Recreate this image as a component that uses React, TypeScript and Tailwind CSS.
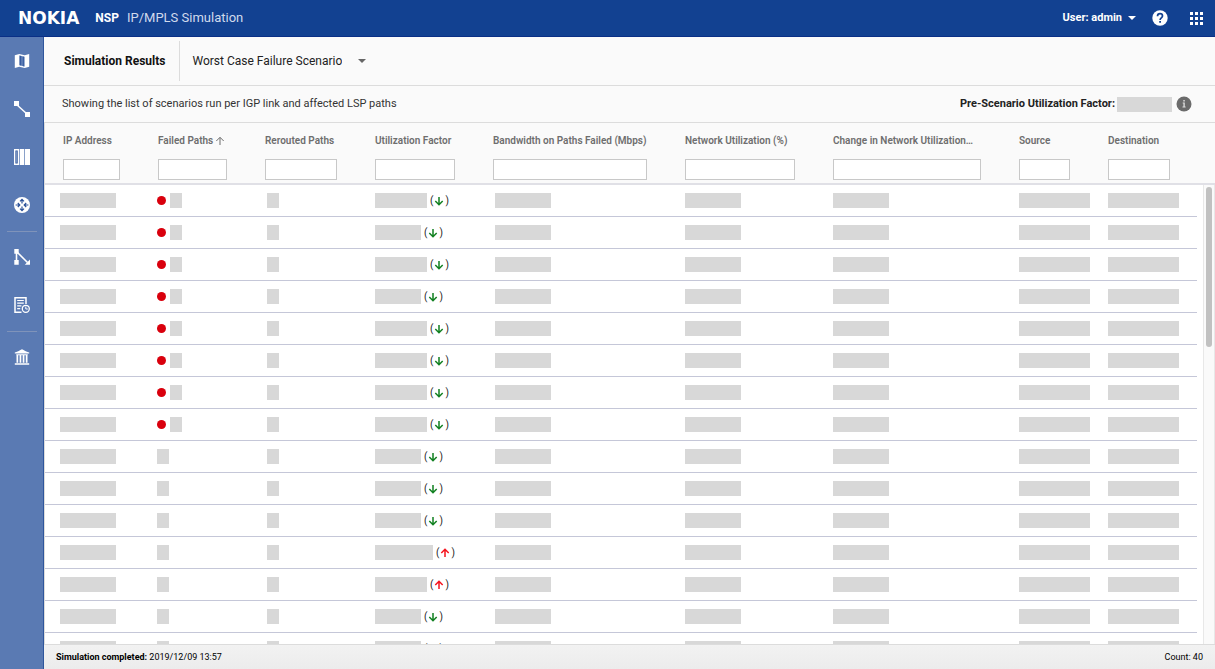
import React from "react";

type Trend = "up" | "down";

interface Row {
  failed: boolean;
  size: "sm" | "md" | "lg";
  trend: Trend;
}

const rows: Row[] = [
  { failed: true, size: "md", trend: "down" },
  { failed: true, size: "sm", trend: "down" },
  { failed: true, size: "md", trend: "down" },
  { failed: true, size: "sm", trend: "down" },
  { failed: true, size: "md", trend: "down" },
  { failed: true, size: "md", trend: "down" },
  { failed: true, size: "md", trend: "down" },
  { failed: true, size: "md", trend: "down" },
  { failed: false, size: "sm", trend: "down" },
  { failed: false, size: "sm", trend: "down" },
  { failed: false, size: "sm", trend: "down" },
  { failed: false, size: "lg", trend: "up" },
  { failed: false, size: "md", trend: "up" },
  { failed: false, size: "sm", trend: "down" },
  { failed: false, size: "sm", trend: "down" },
];

const columns = [
  { label: "IP Address", col: "w-[95px]" },
  { label: "Failed Paths", col: "w-[107px]", sorted: true },
  { label: "Rerouted Paths", col: "w-[110px]" },
  { label: "Utilization Factor", col: "w-[118px]" },
  { label: "Bandwidth on Paths Failed (Mbps)", col: "w-[192px]" },
  { label: "Network Utilization (%)", col: "w-[148px]" },
  { label: "Change in Network Utilization…", col: "w-[186px]" },
  { label: "Source", col: "w-[89px]" },
  { label: "Destination", col: "w-[107px]", last: true },
];

const factorWidth = { sm: "w-[46px]", md: "w-[52px]", lg: "w-[58px]" };

function Bar({ className = "w-14" }: { className?: string }) {
  return <span className={`block h-[15px] shrink-0 bg-[#d8d8d8] ${className}`} />;
}

function Arrow({ up = false, className = "" }: { up?: boolean; className?: string }) {
  return (
    <svg viewBox="0 0 10 10" className={`size-[10px] shrink-0 ${className}`} fill="none" stroke="currentColor" aria-hidden="true">
      {up ? <path d="M5 9V1.500M1.300 5 5 1.300 8.700 5" /> : <path d="M5 1v7.500M1.300 5 5 8.700 8.700 5" />}
    </svg>
  );
}

function MapIcon() {
  return (
    <svg viewBox="0 0 16 16" className="size-4" aria-hidden="true">
      <path fill="#fff" d="M.8 2.2 5.3.9l5.4 1.300L15.200.9v12.900l-4.500 1.300-5.400-1.300-4.500 1.300z" />
      <path fill="#5a7ab3" d="M5.600 2.600l4.700 1.100v9.700l-4.700-1.100z" />
      <path fill="#2a5199" d="M5.600 2.600l1.100.3v9.600l-1.100-.3zM9.400 3.500l.9.2v9.700l-.9-.2z" />
    </svg>
  );
}

function LinkIcon() {
  return (
    <svg viewBox="0 0 16 16" className="size-4" aria-hidden="true">
      <path stroke="#fff" strokeWidth="1.500" d="M2 3l11 10" />
      <path fill="#fff" d="M0 0h5v5H0zM11 11h5v5h-5z" />
    </svg>
  );
}

function ColumnsIcon() {
  return (
    <svg viewBox="0 0 16 16" className="size-4" aria-hidden="true">
      <path fill="#fff" d="M0 0h5v16H0zM5.700 0h4.600v16H5.700zM11 0h5v16h-5z" />
      <path fill="#2a5199" d="M1.400 1.500h2.300v13H1.400z" />
      <path fill="#7c96c4" d="M2.100 2.200H3v11.600h-.9z" />
    </svg>
  );
}

function RouterIcon() {
  return (
    <svg viewBox="0 0 16 16" className="size-4" aria-hidden="true">
      <circle cx="8" cy="8" r="8" fill="#fff" />
      <g fill="none" stroke="#2a5199" strokeWidth="1.200">
        <path d="M8 6.600V2.400M6 4.300l2-2 2 2M8 9.400v4.200M6 11.700l2 2 2-2M1.600 8h4M3.800 6l2 2-2 2M14.400 8h-4M12.200 6l-2 2 2 2" />
      </g>
    </svg>
  );
}

function TopologyIcon() {
  return (
    <svg viewBox="0 0 16 16" className="size-4" aria-hidden="true">
      <path stroke="#fff" strokeWidth="1.600" d="M2.500 3v10M3 3l10.500 10.500" />
      <path fill="#fff" d="M.3 0h4.400v4.800H.3zM.3 11h4.400v4.800H.3zM16 15.800h-5.200L16 10.600z" />
    </svg>
  );
}

function ReportIcon() {
  return (
    <svg viewBox="0 0 16 16" className="size-4" fill="none" stroke="#fff" aria-hidden="true">
      <path strokeWidth="1.500" d="M7.500 15.200H1V.8h11V7" />
      <path strokeWidth="1.200" d="M3.200 3.500h6.600M3.200 6.200h6.600M3.200 8.900h4.200M3.200 11.600h3" />
      <circle cx="11.800" cy="11.800" r="3.500" strokeWidth="1.300" />
      <path strokeWidth="1" d="M11.800 9.600v2.400h2" />
    </svg>
  );
}

function BankIcon() {
  return (
    <svg viewBox="0 0 16 16" className="size-4" fill="#fff" aria-hidden="true">
      <path d="M.8 4.600V3.400C4 2.600 5.800 1.200 8 .2c2.200 1 4 2.400 7.200 3.200v1.200zM2.300 5.200h11.400v1.100H2.300zM2.500 6.300h1.700v7.400H2.500zM5.600 6.300h1.700v7.400H5.600zM8.700 6.300h1.700v7.400H8.700zM11.800 6.300h1.700v7.400h-1.700zM.8 14.200h14.400v1.600H.8z" />
    </svg>
  );
}

function NavLink({ label, children }: { label: string; children: React.ReactNode }) {
  return (
    <a href="#" aria-label={label} className="flex h-12 w-full items-center justify-center">
      {children}
    </a>
  );
}

function NavDivider() {
  return <hr className="mt-0.5 mb-px w-[30px] border-[#7f93ba]" />;
}

export default function App() {
  return (
    <div className="flex h-screen flex-col overflow-hidden bg-[#fafafa] font-[Roboto,'Noto_Sans',sans-serif] text-[#333]">
      <header className="flex h-[37px] shrink-0 items-center border-b border-[#0a2f86] bg-[#124191] pr-3 pl-[18px] text-white">
        <span className="font-['DejaVu_Sans',sans-serif] text-[17px] leading-5 font-bold">NOKIA</span>
        <span className="ml-4 text-[12px] leading-5 font-bold">NSP</span>
        <span className="ml-2 text-[13px] leading-5 text-[#d0daec]">IP/MPLS Simulation</span>
        <button type="button" className="ml-auto flex items-center gap-1.5 text-[11px] leading-5 font-bold">
          User: admin
          <svg viewBox="0 0 8 4" className="h-1 w-2" aria-hidden="true">
            <path fill="#fff" d="M0 0h8L4 4z" />
          </svg>
        </button>
        <button type="button" aria-label="Help" className="ml-4">
          <svg viewBox="0 0 16 16" className="size-4" aria-hidden="true">
            <circle cx="8" cy="8" r="7.700" fill="#fff" />
            <path fill="none" stroke="#124191" strokeWidth="1.700" d="M5.500 6.300C5.500 4.600 6.600 3.700 8 3.700s2.500.9 2.500 2.300c0 1.800-2.400 1.900-2.400 3.900" />
            <path fill="#124191" d="M7.200 11h1.800v1.800H7.200z" />
          </svg>
        </button>
        <button type="button" aria-label="Applications" className="ml-[22px]">
          <svg viewBox="0 0 13 13" className="size-[13px]" fill="#fff" aria-hidden="true">
            <path d="M0 0h3v3H0zM5 0h3v3H5zM10 0h3v3h-3zM0 5h3v3H0zM5 5h3v3H5zM10 5h3v3h-3zM0 10h3v3H0zM5 10h3v3H5zM10 10h3v3h-3z" />
          </svg>
        </button>
      </header>

      <div className="flex min-h-0 flex-1">
        <nav aria-label="Main" className="flex w-11 shrink-0 flex-col items-center border-r border-[#2f569c] bg-[#5a7ab3]">
          <NavLink label="Map"><MapIcon /></NavLink>
          <NavLink label="Links"><LinkIcon /></NavLink>
          <NavLink label="Columns"><ColumnsIcon /></NavLink>
          <NavLink label="Routers"><RouterIcon /></NavLink>
          <NavDivider />
          <NavLink label="Topology"><TopologyIcon /></NavLink>
          <NavLink label="Reports"><ReportIcon /></NavLink>
          <NavDivider />
          <NavLink label="Archive"><BankIcon /></NavLink>
        </nav>

        <main className="flex min-w-0 flex-1 flex-col">
          <div className="flex h-[49px] shrink-0 items-center border-b border-[#dcdcdc] pl-5">
            <h1 className="text-[12px] leading-5 font-bold text-[#111]">Simulation Results</h1>
            <div className="relative ml-[14px] flex h-10 items-center border-l border-[#dcdcdc] pl-3">
              <select aria-label="Scenario" className="appearance-none bg-transparent pr-6 text-[12px] leading-5 text-[#222]">
                <option>Worst Case Failure Scenario</option>
              </select>
              <svg viewBox="0 0 8 4" className="pointer-events-none absolute right-0 h-1 w-2" aria-hidden="true">
                <path fill="#666" d="M0 0h8L4 4z" />
              </svg>
            </div>
          </div>

          <div className="flex h-9 shrink-0 items-center pr-[23px] pl-[18px]">
            <p className="text-[11px] leading-5">Showing the list of scenarios run per IGP link and affected LSP paths</p>
            <span className="ml-auto text-[11px] leading-5 font-bold text-[#222]">Pre-Scenario Utilization Factor:</span>
            <Bar className="ml-0.5 w-[55px]" />
            <svg viewBox="0 0 16 16" className="ml-1 size-4" role="img" aria-label="Information">
              <circle cx="8" cy="8" r="7.500" fill="#6b6b6b" />
              <path fill="#ddd" d="M7.300 4h1.500v1.500H7.300zM6.700 6.600h2.100v4h.8v1H6.500v-1h.9v-3h-.7z" />
            </svg>
          </div>

          <div className="relative min-h-0 flex-1 overflow-hidden border-t border-l border-[#dcdcdc] bg-white">
            <table className="w-full table-fixed border-separate border-spacing-0 text-left">
              <colgroup>
                {columns.map((c) => (
                  <col key={c.label} className={c.col} />
                ))}
                <col className="w-[18px]" />
              </colgroup>
              <thead>
                <tr className="h-[62px] bg-[#fafafa]">
                  {columns.map((c) => (
                    <th
                      key={c.label}
                      scope="col"
                      className={`border-b-2 border-[#e0e0e6] pt-2 pb-0 pl-[18px] align-top text-[10px] leading-5 font-semibold whitespace-nowrap text-[#6e6e6e] ${c.last ? "pr-[27px]" : "pr-5"}`}
                    >
                      <span className="flex items-center gap-0.5">
                        {c.label}
                        {c.sorted && <Arrow up />}
                      </span>
                      <input
                        type="text"
                        aria-label={`Filter ${c.label}`}
                        className="mt-2 block h-[21px] w-full border border-[#c8c8c8] bg-white px-1 text-[10px] font-normal"
                      />
                    </th>
                  ))}
                  <td className="border-b-2 border-[#e0e0e6]" />
                </tr>
              </thead>
              <tbody>
                {rows.map((row, i) => (
                  <tr key={i} className="h-8 *:border-[#c5c7d8] *:not-last:border-b">
                    <td className="pl-[15px]"><Bar /></td>
                    <td className="pl-[17px]">
                      <span className="flex items-center gap-1">
                        {row.failed && <span className="size-[9px] rounded-full bg-[#d9000d]" />}
                        <Bar className="w-3" />
                      </span>
                    </td>
                    <td className="pl-5"><Bar className="w-3" /></td>
                    <td className="pl-[18px]">
                      <span className="flex items-center gap-[3px] text-[10px] leading-4 text-[#222]">
                        <Bar className={factorWidth[row.size]} />
                        <span className="flex items-center gap-px">
                          (
                          <Arrow
                            up={row.trend === "up"}
                            className={row.trend === "up" ? "stroke-[1.5] text-[#f5141e]" : "stroke-[1.5] text-[#118020]"}
                          />
                          )
                        </span>
                      </span>
                    </td>
                    <td className="pl-5"><Bar /></td>
                    <td className="pl-[18px]"><Bar /></td>
                    <td className="pl-[18px]"><Bar /></td>
                    <td className="pl-[18px]"><Bar className="w-[71px]" /></td>
                    <td className="pl-[18px]"><Bar className="w-[71px]" /></td>
                    <td />
                  </tr>
                ))}
              </tbody>
            </table>
            <div className="absolute top-[62px] right-0 bottom-0 w-3 border-x border-[#e8e8e8] bg-[#fafafa] px-0.5 pt-0.5">
              <div className="h-40 w-1.5 rounded-full bg-[#c1c1c1]" />
            </div>
          </div>

          <footer className="flex h-[25px] shrink-0 items-center justify-between border-t border-[#dcdcdc] bg-linear-to-b from-[#f2f2f2] to-[#ececec] px-3 text-[9px] leading-5 text-black">
            <span>
              <b className="font-bold">Simulation completed:</b> 2019/12/09 13:57
            </span>
            <span>Count: 40</span>
          </footer>
        </main>
      </div>
    </div>
  );
}
